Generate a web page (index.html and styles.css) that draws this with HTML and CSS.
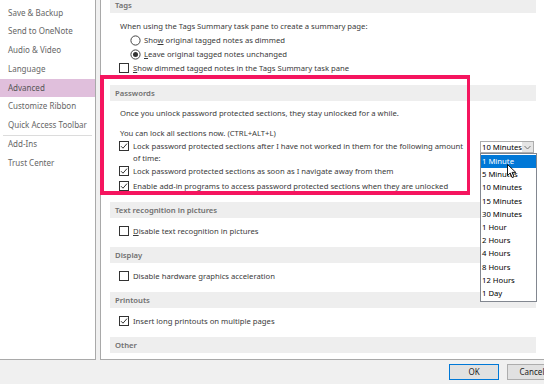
FILE: index.html
```html
<!DOCTYPE html>
<html lang="en">
<head>
    <meta charset="UTF-8">
    <title>OneNote Options - Advanced</title>
    <link rel="stylesheet" href="styles.css">
</head>
<body>
    <div class="options">
        <div class="panes">
            <ul class="nav">
                <li>Save &amp; Backup</li>
                <li>Send to OneNote</li>
                <li>Audio &amp; Video</li>
                <li>Language</li>
                <li class="active">Advanced</li>
                <li>Customize Ribbon</li>
                <li class="sep">Quick Access Toolbar</li>
                <li>Add-Ins</li>
                <li>Trust Center</li>
            </ul>

            <div class="content">
                <div class="scroll">
                    <section class="group tags">
                        <h3>Tags</h3>
                        <p class="line">When using the Tags Summary task pane to create a summary page:</p>
                        <label class="radio">
                            <svg width="11" height="11" viewBox="0 0 11 11"><circle cx="5.5" cy="5.5" r="4.6" fill="#fff" stroke="#444"/></svg>
                            <span>Sho<u>w</u> original tagged notes as dimmed</span>
                        </label>
                        <label class="radio">
                            <svg width="11" height="11" viewBox="0 0 11 11"><circle cx="5.5" cy="5.5" r="4.6" fill="#fff" stroke="#444"/><circle cx="5.5" cy="5.5" r="2.5" fill="#333"/></svg>
                            <span><u>L</u>eave original tagged notes unchanged</span>
                        </label>
                        <label class="check">
                            <svg width="10" height="10" viewBox="0 0 10 10"><rect x="0.5" y="0.5" width="9" height="9" fill="#fff" stroke="#333"/></svg>
                            <span><u>S</u>how dimmed tagged notes in the Tags Summary task pane</span>
                        </label>
                    </section>

                    <section class="group passwords">
                        <h3>Passwords</h3>
                        <p class="line">Once you unlock password protected sections, they stay unlocked for a while.</p>
                        <p class="line gap">You can lock all sections now. (CTRL+ALT+L)</p>
                        <label class="check wrap">
                            <svg width="10" height="10" viewBox="0 0 10 10"><rect x="0.5" y="0.5" width="9" height="9" fill="#fff" stroke="#333"/><path d="M2 5.2 L4 7.2 L8 2.6" fill="none" stroke="#333"/></svg>
                            <span>Lock password protected sections after I have not worked in them for the following amount<br>of time:</span>
                        </label>
                        <label class="check">
                            <svg width="10" height="10" viewBox="0 0 10 10"><rect x="0.5" y="0.5" width="9" height="9" fill="#fff" stroke="#333"/><path d="M2 5.2 L4 7.2 L8 2.6" fill="none" stroke="#333"/></svg>
                            <span>Lock password protected sections as soon as I navigate away from them</span>
                        </label>
                        <label class="check last">
                            <svg width="10" height="10" viewBox="0 0 10 10"><rect x="0.5" y="0.5" width="9" height="9" fill="#fff" stroke="#333"/><path d="M2 5.2 L4 7.2 L8 2.6" fill="none" stroke="#333"/></svg>
                            <span>Enable add-in programs to access password protected sections when they are unlocked</span>
                        </label>
                    </section>

                    <section class="group single">
                        <h3>Text recognition in pictures</h3>
                        <label class="check">
                            <svg width="10" height="10" viewBox="0 0 10 10"><rect x="0.5" y="0.5" width="9" height="9" fill="#fff" stroke="#333"/></svg>
                            <span><u>D</u>isable text recognition in pictures</span>
                        </label>
                    </section>

                    <section class="group single">
                        <h3>Display</h3>
                        <label class="check">
                            <svg width="10" height="10" viewBox="0 0 10 10"><rect x="0.5" y="0.5" width="9" height="9" fill="#fff" stroke="#333"/></svg>
                            <span>Disable hardware graphics acceleration</span>
                        </label>
                    </section>

                    <section class="group single">
                        <h3>Printouts</h3>
                        <label class="check">
                            <svg width="10" height="10" viewBox="0 0 10 10"><rect x="0.5" y="0.5" width="9" height="9" fill="#fff" stroke="#333"/><path d="M2 5.2 L4 7.2 L8 2.6" fill="none" stroke="#333"/></svg>
                            <span>Insert long printouts on multiple pages</span>
                        </label>
                    </section>

                    <section class="group">
                        <h3>Other</h3>
                    </section>
                </div>
            </div>
        </div>

        <div class="buttons">
            <button class="btn default">OK</button>
            <button class="btn">Cancel</button>
        </div>
    </div>

    <!-- highlight drawn over the screenshot -->
    <div class="callout"></div>

    <!-- open combo box -->
    <div class="combo">
        <div class="combo-box">
            <span>10 Minutes</span>
            <span class="arrow"><svg width="7" height="5" viewBox="0 0 7 5"><path d="M0.5 1 L3.5 4 L6.5 1" fill="none" stroke="#777"/></svg></span>
        </div>
        <ul class="combo-list">
            <li class="selected">1 Minute</li>
            <li>5 Minutes</li>
            <li>10 Minutes</li>
            <li>15 Minutes</li>
            <li>30 Minutes</li>
            <li>1 Hour</li>
            <li>2 Hours</li>
            <li>4 Hours</li>
            <li>8 Hours</li>
            <li>12 Hours</li>
            <li>1 Day</li>
        </ul>
    </div>
    <svg class="cursor" width="10" height="15" viewBox="0 0 10 15"><path d="M0.5 0.5 L0.5 11.5 L3.2 9 L5.2 13.6 L7 12.8 L5.1 8.4 L8.8 8.4 Z" fill="#fff" stroke="#000" stroke-width="0.9"/></svg>
</body>
</html>
```

FILE: styles.css
```css
body {
    margin: 0;
    background: #f0f0f0;
    font-family: "Noto Sans", "Open Sans", sans-serif;
    font-size: 8px;
    color: #333;
    overflow: hidden;
}

.options {
    width: 544px;
    height: 384px;
    display: flex;
    flex-direction: column;
}

.panes {
    display: flex;
    gap: 4px;
    height: 360px;
}

/* left category list */
.nav {
    list-style: none;
    margin: 0;
    padding: 3.5px 0 0;
    width: 96px;
    background: #fff;
    border-right: 1px solid #a9a9a9;
    border-bottom: 1px solid #a9a9a9;
    box-sizing: border-box;
}

.nav li {
    height: 18.75px;
    line-height: 18.75px;
    padding-left: 8px;
    color: #666;
    white-space: nowrap;
    position: relative;
}

.nav li.active {
    background: #e0bfdc;
    color: #555;
}

.nav li.sep::after {
    content: '';
    position: absolute;
    left: 3px;
    right: 3px;
    bottom: -1px;
    border-bottom: 1px solid #dcdcdc;
}

/* right options pane */
.content {
    flex: 1;
    background: #fff;
    border-left: 1px solid #a9a9a9;
    border-bottom: 1px solid #a9a9a9;
    overflow: hidden;
    font-size: 7.7px;
    color: #3a3a3a;
}

.scroll {
    margin-top: -3px;
}

.group h3 {
    margin: 0 8px 0 9px;
    height: 16px;
    line-height: 16px;
    padding-left: 5px;
    background: #eeeeee;
    color: #707070;
    font-size: 7.7px;
    font-weight: 600;
}

.line {
    margin: 0;
    height: 14px;
    line-height: 14px;
    padding-left: 19px;
    white-space: nowrap;
}

.check,
.radio {
    display: flex;
    align-items: center;
    gap: 4px;
    height: 14px;
    white-space: nowrap;
}

.check {
    padding-left: 18px;
}

.radio {
    padding-left: 29px;
    gap: 3px;
}

.check svg,
.radio svg {
    flex: none;
}

.check u,
.radio u {
    text-decoration-thickness: 1px;
}

.tags {
    padding-bottom: 10px;
}

.tags h3 + .line {
    margin-top: 6px;
}

.passwords {
    padding-bottom: 9px;
}

.passwords h3 + .line {
    margin-top: 5px;
}

.line.gap {
    margin-top: 6px;
}

.check.wrap {
    height: auto;
    align-items: flex-start;
    line-height: 12px;
}

.check.wrap svg {
    margin-top: 1px;
}

.check.last {
    margin-top: 1px;
}

.single {
    padding-bottom: 9px;
}

.single h3 + .check {
    margin-top: 6px;
}

/* dialog buttons */
.buttons {
    flex: 1;
    display: flex;
    justify-content: flex-end;
    align-items: center;
    gap: 8px;
    margin-right: -13px;
    padding-bottom: 1px;
}

.btn {
    width: 50px;
    height: 16px;
    padding: 0;
    background: #e1e1e1;
    border: 1px solid #adadad;
    font-family: "Noto Sans", "Open Sans", sans-serif;
    font-size: 8px;
    color: #222;
}

.btn.default {
    border-color: #0078d7;
}

/* pink annotation */
.callout {
    position: absolute;
    left: 100px;
    top: 75px;
    width: 370px;
    height: 120px;
    box-sizing: border-box;
    border: 4px solid #f5155f;
    border-right-width: 3px;
}

/* dropdown */
.combo {
    position: absolute;
    left: 480px;
    top: 141px;
    width: 57px;
    font-size: 7.7px;
    color: #000;
    white-space: nowrap;
}

.combo-box {
    width: 54px;
    height: 12px;
    box-sizing: border-box;
    border: 1px solid #adadad;
    background: #fff;
    display: flex;
    align-items: center;
    justify-content: space-between;
    padding-left: 1px;
    line-height: 10px;
}

.combo-box .arrow {
    width: 13px;
    height: 10px;
    background: #e5e5e5;
    display: flex;
    align-items: center;
    justify-content: center;
}

.combo-list {
    list-style: none;
    margin: 0;
    padding: 1px 0;
    width: 57px;
    border: 1px solid #828790;
    box-sizing: border-box;
    background: #fff;
}

.combo-list li {
    height: 13.2px;
    line-height: 13.2px;
    padding-left: 1px;
}

.combo-list li.selected {
    background: #0078d7;
    color: #fff;
}

.cursor {
    position: absolute;
    left: 507px;
    top: 164px;
}
```
